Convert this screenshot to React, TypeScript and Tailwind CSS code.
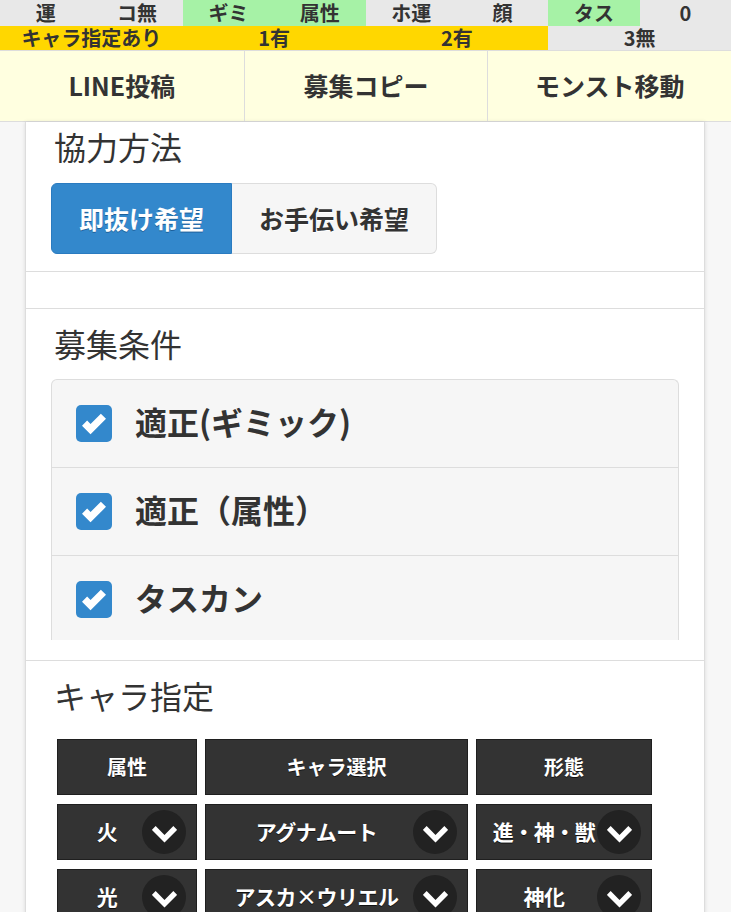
import React from "react";

const font = { fontFamily: '"Noto Sans CJK JP", "Noto Sans", sans-serif' };

function Chevron() {
  return (
    <svg width="25" height="25" viewBox="0 0 14 14" fill="#fff">
      <polygon points="11.949,3.404 7,8.354 2.05,3.404 -0.071,5.525 7,12.596 14.07,5.525" />
    </svg>
  );
}

function Check() {
  return (
    <div className="w-[36px] h-[37px] rounded-[5px] bg-[#3388cc] flex items-center justify-center shrink-0">
      <svg width="24" height="24" viewBox="0 0 14 14" fill="#fff">
        <polygon points="14,4 11,1 5.003,6.997 3,5 0,8 4.966,13 4.983,12.982 5,13" />
      </svg>
    </div>
  );
}

function SelectCell({ label }: { label: string }) {
  return (
    <div className="relative h-[56px] bg-[#333] border border-[#1f1f1f] flex items-center justify-center pr-[40px]">
      <span className="text-white font-bold text-[21px] tracking-[-0.5px] whitespace-nowrap [text-shadow:0_1px_0_#111]">{label}</span>
      <div className="absolute right-[10px] top-1/2 -translate-y-1/2 w-[44px] h-[44px] rounded-full bg-[#222] flex items-center justify-center">
        <Chevron />
      </div>
    </div>
  );
}

function HeadCell({ label }: { label: string }) {
  return (
    <div className="h-[56px] bg-[#333] border border-[#1f1f1f] flex items-center justify-center">
      <span className="text-white font-bold text-[20px] [text-shadow:0_1px_0_#111]">{label}</span>
    </div>
  );
}

export default function App() {
  const row1: [string, string][] = [
    ["運", "bg-[#e8e8e8]"],
    ["コ無", "bg-[#e8e8e8]"],
    ["ギミ", "bg-[#a6f2a6]"],
    ["属性", "bg-[#a6f2a6]"],
    ["ホ運", "bg-[#e8e8e8]"],
    ["顔", "bg-[#e8e8e8]"],
    ["タス", "bg-[#a6f2a6]"],
    ["0", "bg-[#e8e8e8]"],
  ];
  const row2: [string, string][] = [
    ["キャラ指定あり", "bg-[#ffd700]"],
    ["1有", "bg-[#ffd700]"],
    ["2有", "bg-[#ffd700]"],
    ["3無", "bg-[#e8e8e8]"],
  ];
  return (
    <div style={font} className="w-[731px] h-[912px] overflow-hidden bg-[#f7f7f7] text-[#333]">
      <div className="grid grid-cols-8 h-[26px]">
        {row1.map(([t, c], i) => (
          <div key={i} className={`${c} flex items-center justify-center font-bold text-[20px] leading-[24px]`}>
            {t}
          </div>
        ))}
      </div>
      <div className="grid grid-cols-4 h-[24px]">
        {row2.map(([t, c], i) => (
          <div key={i} className={`${c} flex items-center justify-center font-bold text-[20px] leading-[24px]`}>
            {t}
          </div>
        ))}
      </div>
      <div className="grid grid-cols-3 h-[72px] bg-[#ffffe0] border-y border-[#ddd]">
        {["LINE投稿", "募集コピー", "モンスト移動"].map((t, i) => (
          <div
            key={i}
            className={`flex items-center justify-center font-bold text-[25px] ${i > 0 ? "border-l border-[#ddd]" : ""}`}
          >
            {t}
          </div>
        ))}
      </div>

      <div className="ml-[25px] mr-[26px] bg-white border-x border-[#ddd] shadow-[0_0_4px_rgba(0,0,0,0.12)]">
        <section className="px-[25px] pt-[4px] pb-[17px] border-b border-[#ddd]">
          <h2 className="text-[32px] leading-[40px] ml-[3px]">協力方法</h2>
          <div className="mt-[17px] flex">
            <div className="w-[181px] h-[71px] rounded-l-[6px] bg-[#3388cc] border border-[#2a7bc0] flex items-center justify-center text-white font-bold text-[25px] [text-shadow:0_1px_0_#1d5f99]">
              即抜け希望
            </div>
            <div className="w-[205px] h-[71px] rounded-r-[6px] bg-[#f6f6f6] border border-l-0 border-[#ddd] flex items-center justify-center font-bold text-[25px] [text-shadow:0_1px_0_#fff]">
              お手伝い希望
            </div>
          </div>
        </section>
        <section className="h-[37px] border-b border-[#ddd]" />
        <section className="px-[25px] pt-[14px] pb-[20px] border-b border-[#ddd]">
          <h2 className="text-[32px] leading-[40px] ml-[3px]">募集条件</h2>
          <div className="mt-[16px] h-[261px] overflow-hidden rounded-t-[6px] border-x border-t border-[#ddd] bg-[#f6f6f6]">
            {["適正(ギミック)", "適正（属性）", "タスカン"].map((t, i) => (
              <div key={i} className="h-[88px] border-b border-[#ddd] flex items-center pl-[24px] gap-[23px]">
                <Check />
                <span className="relative -top-[3px] font-bold text-[32px]">{t}</span>
              </div>
            ))}
          </div>
        </section>
        <section className="px-[25px] pt-[14px] pb-[20px]">
          <h2 className="text-[32px] leading-[40px] ml-[3px]">キャラ指定</h2>
          <div className="mt-[24px] ml-[6px] grid grid-cols-[140px_263px_176px] gap-x-[8px] gap-y-[9px]">
            <HeadCell label="属性" />
            <HeadCell label="キャラ選択" />
            <HeadCell label="形態" />
            <SelectCell label="火" />
            <SelectCell label="アグナムート" />
            <SelectCell label="進・神・獣" />
            <SelectCell label="光" />
            <SelectCell label="アスカ×ウリエル" />
            <SelectCell label="神化" />
          </div>
        </section>
      </div>
    </div>
  );
}
